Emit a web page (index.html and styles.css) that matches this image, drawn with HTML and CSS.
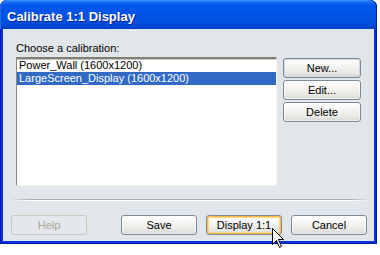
FILE: index.html
```html
<!DOCTYPE html>
<html>
<head>
<meta charset="utf-8">
<link rel="stylesheet" href="styles.css">
</head>
<body>
<div class="window">
  <div class="titlebar">Calibrate 1:1 Display</div>
  <div class="content">
    <div class="label">Choose a calibration:</div>
    <div class="main">
      <div class="list">
        <div class="item">Power_Wall (1600x1200)</div>
        <div class="item selected">LargeScreen_Display (1600x1200)</div>
      </div>
      <div class="side">
        <button class="btn default">New...</button>
        <button class="btn">Edit...</button>
        <button class="btn">Delete</button>
      </div>
    </div>
    <div class="sep"></div>
    <div class="bottom">
      <button class="btn disabled">Help</button>
      <div class="spacer"></div>
      <button class="btn">Save</button>
      <button class="btn hover">Display 1:1</button>
      <button class="btn cancel">Cancel</button>
    </div>
  </div>
</div>
<svg class="cursor" width="13" height="20" viewBox="0 0 13 20">
  <path d="M0.5 0.5 L0.5 16.5 L4.5 12.5 L7.5 19.5 L9.5 18.5 L6.5 11.5 L11.5 11.5 Z" fill="#fff" stroke="#000" stroke-width="1"/>
</svg>
</body>
</html>
```

FILE: styles.css
```css
html, body {
  margin: 0;
  padding: 0;
  background: #fff;
}
body {
  position: relative;
  width: 380px;
  height: 255px;
  overflow: hidden;
  font-family: "Liberation Sans", Arial, sans-serif;
  font-size: 11px;
  color: #000;
}
.window {
  width: 377px;
  height: 244px;
  box-sizing: border-box;
  padding: 0 3px 3px;
  background: #0831d9;
  border-radius: 7px 7px 0 0;
  display: flex;
  flex-direction: column;
  box-shadow: inset 0 -1px 0 #001ea0, inset 1px 0 0 #0019b0, inset -1px 0 0 #001ea0;
}
.titlebar {
  height: 29px;
  box-sizing: border-box;
  margin: 0 -3px;
  padding: 4px 0 0 7px;
  line-height: 25px;
  border-radius: 7px 7px 0 0;
  background: linear-gradient(to bottom, #3d95ff 0, #1a6ff2 2px, #0058ee 5px, #0053e6 14px, #0050e0 22px, #0048d6 26px, #003fc8 29px);
  color: #fff;
  font-weight: bold;
  font-size: 13px;
  text-shadow: 1px 1px 0 #0a1e8c;
  box-shadow: inset 1px 0 0 #2a6ae8, inset -1px 0 0 #00259c;
}
.content {
  flex: 1;
  background: #e1e6ea;
  padding: 13px 13px 6px;
  display: flex;
  flex-direction: column;
}
.label {
  height: 13px;
  line-height: 13px;
  margin-bottom: 2px;
}
.main {
  display: flex;
  gap: 6px;
  height: 129px;
}
.list {
  width: 261px;
  height: 129px;
  box-sizing: border-box;
  background: #fff;
  border-style: solid;
  border-width: 2px 1px 1px 1px;
  border-color: #7f7f74 #f4f3ee #f4f3ee #8a8a80;
  box-shadow: inset 0 1px 0 #c8c8c0;
  padding: 0;
}
.item {
  height: 13px;
  line-height: 13px;
  padding-left: 2px;
  white-space: nowrap;
}
.item.selected {
  background: #316ac5;
  color: #fff;
}
.side {
  display: flex;
  flex-direction: column;
  gap: 2px;
  padding-top: 1px;
  width: 78px;
}
.btn {
  box-sizing: border-box;
  height: 20px;
  padding: 0;
  font-family: "Liberation Sans", Arial, sans-serif;
  font-size: 11px;
  color: #000;
  border: 1px solid #7b8a99;
  border-radius: 3px;
  background: linear-gradient(to bottom, #ffffff 0, #f4f4f2 40%, #e8e8e4 75%, #d6d7d9 100%);
  box-shadow: inset 0 0 0 1px rgba(255,255,255,0.6);
  line-height: 18px;
  text-align: center;
}
.side .btn {
  width: 78px;
}
.btn.default {
  box-shadow: inset 0 0 0 1px #cdd7e4;
}
.sep {
  height: 2px;
  margin: 13px -9px 0 -6px;
  background:
    linear-gradient(to right, #e1e6ea 0, rgba(225,230,234,0) 20px, rgba(225,230,234,0) calc(100% - 20px), #e1e6ea 100%),
    linear-gradient(to bottom, #a7adb1 0, #a7adb1 1px, #ffffff 1px, #ffffff 2px);
}
.bottom {
  display: flex;
  gap: 9px;
  margin: 14px -6px 0 -5px;
  height: 20px;
}
.bottom .btn {
  width: 76px;
}
.spacer {
  flex: 1;
}
.btn.disabled {
  color: #aca899;
  border-color: #c9c7ba;
  background: #e4e8ec;
  box-shadow: none;
}
.btn.hover {
  border-color: #7b8a99;
  box-shadow: inset 0 0 0 1px #f9b849, inset 0 0 0 2px #fcd88f;
}
.cursor {
  position: absolute;
  left: 272px;
  top: 228px;
}
```
